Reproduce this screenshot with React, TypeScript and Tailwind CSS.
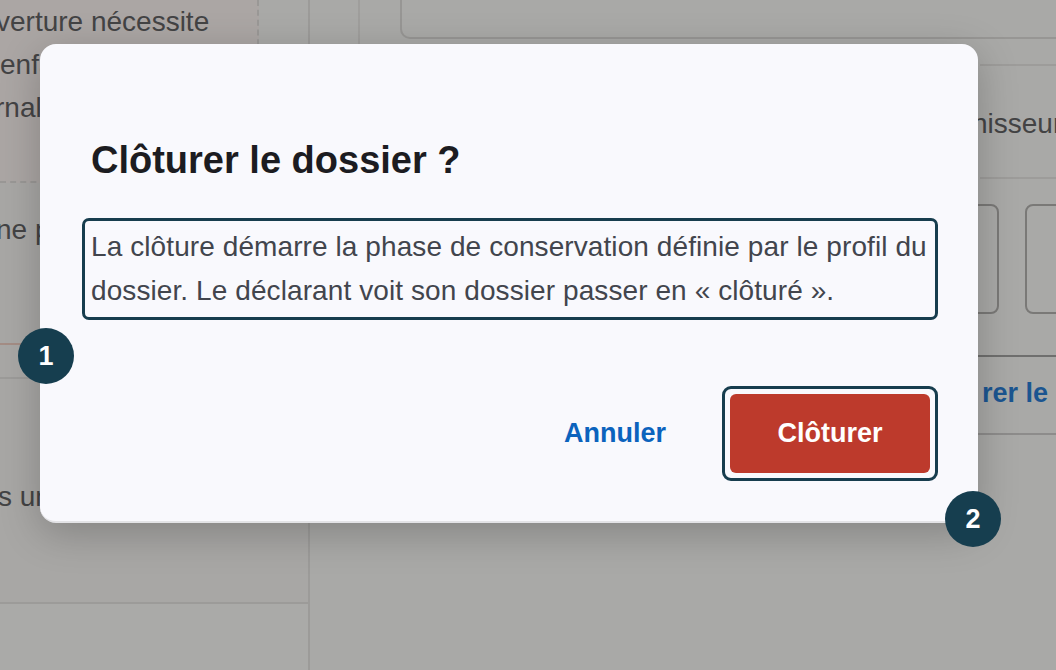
import React from "react";

const font = { fontFamily: '"Liberation Sans", Arial, sans-serif' };

function Background() {
  return (
    <div className="flex h-[670px] w-[1056px] overflow-hidden bg-[#a9a9a7] text-[#434344]" style={font}>
      {/* left column */}
      <div className="flex w-[310px] shrink-0 flex-col border-r-2 border-[#9c9b99]">
        <div className="flex h-[183px] w-[259px] flex-col border-b-2 border-r-2 border-dashed border-b-[#9a9896] border-r-[#9a9896] bg-[#aba6a4] pt-[0px] text-[28px] leading-[43px]">
          <div className="-ml-[4px] whitespace-nowrap">verture nécessite</div>
          <div className="whitespace-nowrap">enfant</div>
          <div className="-ml-[5px] whitespace-nowrap">rnal</div>
        </div>
        <div className="h-[160px] bg-[#a8a7a5] pt-[25px] text-[28px] leading-[43px]">
          <div className="-ml-[4px] whitespace-nowrap">ne p</div>
        </div>
        <div className="h-[2px] w-[60px] bg-[#a48d85]" />
        <div className="h-[32px] bg-[#a8a7a5]" />
        <div className="h-[2px] bg-[#9c9b99]" />
        <div className="h-[223px] bg-[#a8a7a5] pt-[96px] text-[28px] leading-[43px]">
          <div className="-ml-[2px] whitespace-nowrap">s un</div>
        </div>
        <div className="h-[2px] bg-[#9c9b99]" />
        <div className="flex-1 bg-[#aaaaa8]" />
      </div>
      {/* right area */}
      <div className="flex flex-1 flex-col">
        <div className="flex">
          <div className="h-[44px] w-[50px] border-r-2 border-[#9f9e9c]" />
          <div className="-mt-[20px] ml-[40px] h-[59px] flex-1 rounded-b-[10px] border-2 border-[#979694]" />
        </div>
        <div className="ml-[670px] mt-[20px] h-[2px] bg-[#9d9c9a]" />
        <div className="ml-[662px] h-[111px] pt-[38px] text-[28px] leading-[40px] whitespace-nowrap">
          <span>nisseur</span>
        </div>
        <div className="ml-[670px] h-[2px] bg-[#9d9c9a]" />
        <div className="ml-[480px] mt-[25px] flex gap-[26px]">
          <div className="h-[110px] w-[209px] rounded-[8px] border-2 border-[#7a7977]" />
          <div className="h-[110px] w-[209px] rounded-[8px] border-2 border-[#7a7977]" />
        </div>
        <div className="ml-[640px] mt-[41px] h-[2px] bg-[#6f6f6e]" />
        <div className="ml-[670px] h-[76px] pt-[16px] text-[27px] font-bold leading-[40px] text-[#1b5590] whitespace-nowrap">
          <span className="ml-[2px]">rer le dossier</span>
        </div>
        <div className="ml-[640px] h-[2px] bg-[#8d8c8b]" />
      </div>
    </div>
  );
}

function Badge({ n, className }: { n: string; className: string }) {
  return (
    <div
      className={`absolute flex h-[56px] w-[56px] items-center justify-center rounded-full bg-[#163e4f] text-[27px] font-bold text-white ${className}`}
      style={font}
    >
      {n}
    </div>
  );
}

export default function App() {
  return (
    <div className="relative h-[670px] w-[1056px] overflow-hidden">
      <Background />
      <div
        className="absolute left-[40px] top-[44px] flex h-[479px] w-[938px] flex-col rounded-[16px] border-b-2 border-[#e3e3e6] bg-[#f9f9fd] pl-[42px] pr-[40px] pt-[94px] shadow-[0_10px_40px_rgba(0,0,0,0.22)]"
        style={font}
      >
        <h2 className="pl-[9px] text-[38px] font-bold leading-[44px] text-[#1c1c21]">Clôturer le dossier ?</h2>
        <div className="mt-[36px] rounded-[7px] border-[3px] border-[#173d4e] px-[6px] py-[4px] text-[28px] leading-[44px] tracking-[0.09px] text-[#42454d] whitespace-nowrap">
          La clôture démarre la phase de conservation définie par le profil du
          <br />
          dossier. Le déclarant voit son dossier passer en « clôturé ».
        </div>
        <div className="mt-[66px] flex items-center justify-end gap-[56px]">
          <button className="text-[27px] font-bold text-[#0b63bd]">Annuler</button>
          <div className="rounded-[9px] border-[3px] border-[#173d4e] p-[5px]">
            <button className="flex h-[79px] w-[200px] items-center justify-center rounded-[6px] bg-[#bd3a2c] text-[27px] font-bold text-white">
              Clôturer
            </button>
          </div>
        </div>
      </div>
      <Badge n="1" className="left-[18px] top-[328px]" />
      <Badge n="2" className="left-[945px] top-[491px]" />
    </div>
  );
}
